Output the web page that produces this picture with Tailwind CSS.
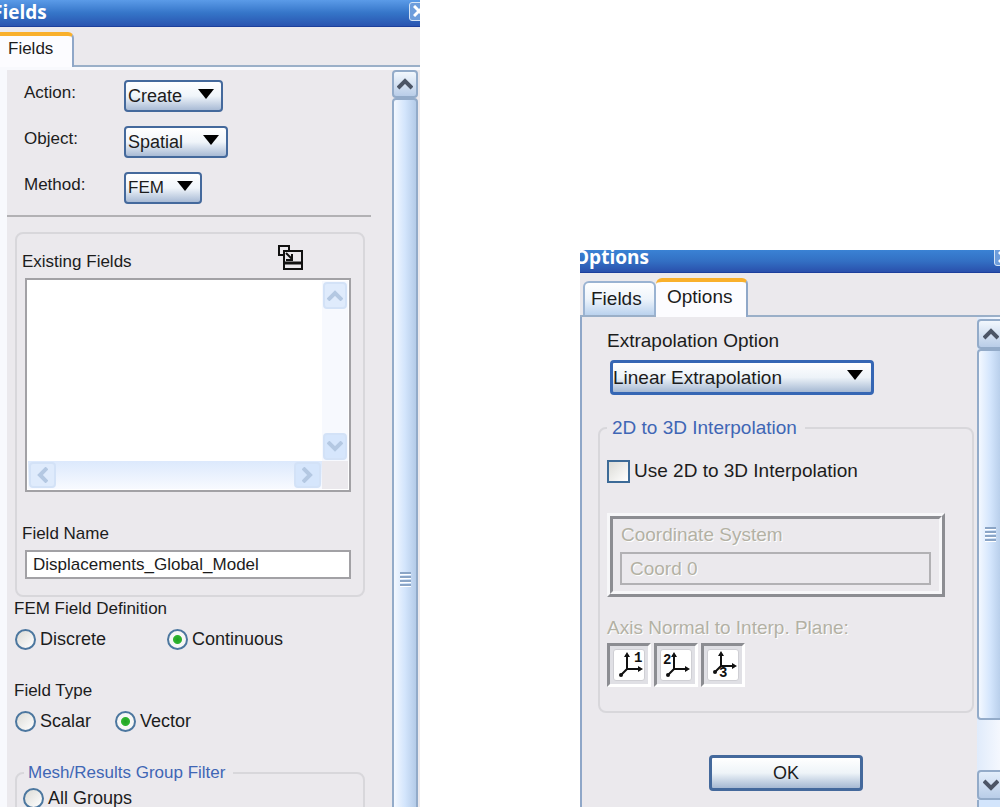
<!DOCTYPE html>
<html lang="en">
<head>
  <meta charset="UTF-8" />
  <meta name="viewport" content="width=device-width, initial-scale=1.0" />
  <title>Fields</title>
  <script src="https://cdn.jsdelivr.net/npm/@tailwindcss/browser@4"></script>
</head>
<body class="flex h-screen items-stretch justify-between overflow-hidden bg-white font-['Liberation_Sans',Arial,sans-serif] text-[17px] leading-6 text-[#1c1c1c]">

  <!-- Fields panel -->
  <section class="flex w-[42%] flex-col overflow-hidden bg-[#ebe9ed]">
    <header class="flex h-[27px] shrink-0 items-center justify-between overflow-hidden border-b border-[#1c3f9c] bg-linear-to-b from-[#5b9be8] via-[#3575c8] to-[#2a54b0]">
      <h1 class="-ml-2 pb-[2px] font-['Open_Sans',sans-serif] text-[19px] leading-6 font-bold text-white">Fields</h1>
      <button aria-label="Close" class="-mr-2 mb-1 flex size-[19px] items-center justify-center rounded-[3px] border border-[#d5e4f6] bg-[#6d9ddc]">
        <svg class="size-3" viewBox="0 0 12 12" fill="none" stroke="#fff" stroke-width="3"><path d="M1 1l10 10M11 1L1 11" /></svg>
      </button>
    </header>

    <nav class="flex h-10 shrink-0 items-end border-b-2 border-[#9aafc8]">
      <a href="#fields" class="-mb-[2px] h-[35px] w-[74px] rounded-tr-md border-t-4 border-r-2 border-t-[#f9b02c] border-r-[#8fa7c8] bg-[#fcfcff] pl-2 leading-[26px]">Fields</a>
    </nav>

    <div class="flex min-h-0 grow border-t-3 border-l-7 border-[#f8f9fd]">
      <form class="min-w-0 grow pt-[10px]">
        <div class="flex flex-col gap-[14px] pl-[17px]">
          <div class="flex h-8">
            <label for="action" class="w-[100px] pt-px">Action:</label>
            <div class="relative h-8 w-[99px]">
              <select id="action" class="h-8 w-full appearance-none rounded-[4px] border-2 border-[#44699c] bg-linear-to-b from-white via-[#f0f5fa] to-[#a9bbd5] pl-[2px] text-[18px]"><option>Create</option></select>
              <svg class="pointer-events-none absolute top-[9px] right-[9px] h-[10px] w-4" viewBox="0 0 16 10"><path d="M0 0h16L8 10z" /></svg>
            </div>
          </div>
          <div class="flex h-8">
            <label for="object" class="w-[100px] pt-px">Object:</label>
            <div class="relative h-8 w-[104px]">
              <select id="object" class="h-8 w-full appearance-none rounded-[4px] border-2 border-[#44699c] bg-linear-to-b from-white via-[#f0f5fa] to-[#a9bbd5] pl-[2px] text-[18px]"><option>Spatial</option></select>
              <svg class="pointer-events-none absolute top-[9px] right-[9px] h-[10px] w-4" viewBox="0 0 16 10"><path d="M0 0h16L8 10z" /></svg>
            </div>
          </div>
          <div class="flex h-8">
            <label for="method" class="w-[100px] pt-px">Method:</label>
            <div class="relative h-8 w-[78px]">
              <select id="method" class="h-8 w-full appearance-none rounded-[4px] border-2 border-[#44699c] bg-linear-to-b from-white via-[#f0f5fa] to-[#a9bbd5] pl-[2px]"><option>FEM</option></select>
              <svg class="pointer-events-none absolute top-[9px] right-[9px] h-[10px] w-4" viewBox="0 0 16 10"><path d="M0 0h16L8 10z" /></svg>
            </div>
          </div>
        </div>

        <hr class="mt-[11px] mr-[21px] border-t-2 border-[#b2b1b4]" />

        <div class="mt-[15px] mr-[27px] ml-2 rounded-lg border-2 border-[#d8d7db] pt-[10px] pr-[12px] pb-4 pl-2">
          <div class="flex h-[30px] justify-between">
            <span id="existing" class="-ml-[3px] self-end">Existing Fields</span>
            <!-- expand list -->
            <button type="button" aria-label="Expand" class="mr-12 size-[26px]">
              <svg class="size-[26px]" viewBox="0 0 26 26" fill="none" stroke="#111" stroke-width="2">
                <path d="M12 6V2H2v9h5" />
                <path d="M6 7h19v18H7V7" />
                <path d="M7 19h18" stroke-width="3" />
                <path d="M9 9l6 6M15 10v6H9" />
              </svg>
            </button>
          </div>
          <div role="listbox" aria-labelledby="existing" class="mt-1 grid h-[214px] grid-cols-[1fr_26px] grid-rows-[1fr_28px] border-2 border-[#a2a1a5] bg-white p-px">
            <div></div>
            <div class="flex flex-col justify-between bg-[#f7f9fe]">
              <button type="button" aria-label="Scroll up" class="m-px flex h-[27px] items-center justify-center rounded-[4px] border-2 border-[#d3e2f7] bg-[#dfebfc]">
                <svg class="h-[11px] w-4" viewBox="0 0 16 11" fill="none" stroke="#b4c8e2" stroke-width="4"><path d="M1 10l7-7 7 7" /></svg>
              </button>
              <button type="button" aria-label="Scroll down" class="m-px flex h-[27px] items-center justify-center rounded-[4px] border-2 border-[#d3e2f7] bg-[#d6e6fc]">
                <svg class="h-[11px] w-4" viewBox="0 0 16 11" fill="none" stroke="#b4c8e2" stroke-width="4"><path d="M1 1l7 7 7-7" /></svg>
              </button>
            </div>
            <div class="flex justify-between bg-linear-to-b from-[#dce9fc] to-[#f8faff]">
              <button type="button" aria-label="Scroll left" class="m-px flex w-[27px] items-center justify-center rounded-[4px] border-2 border-[#d3e2f7] bg-[#dfebfc]">
                <svg class="h-4 w-[11px]" viewBox="0 0 11 16" fill="none" stroke="#b4c8e2" stroke-width="4"><path d="M10 1L3 8l7 7" /></svg>
              </button>
              <button type="button" aria-label="Scroll right" class="m-px flex w-[27px] items-center justify-center rounded-[4px] border-2 border-[#d3e2f7] bg-[#d6e6fc]">
                <svg class="h-4 w-[11px]" viewBox="0 0 11 16" fill="none" stroke="#b4c8e2" stroke-width="4"><path d="M1 1l7 7-7 7" /></svg>
              </button>
            </div>
            <div class="bg-[#ebe9ed]"></div>
          </div>
          <label for="field-name" class="mt-[30px] mb-1 -ml-[3px] block">Field Name</label>
          <input id="field-name" type="text" value="Displacements_Global_Model" class="block h-[29px] w-full border-2 border-[#a2a1a5] bg-white px-[6px]" />
        </div>

        <div class="pl-[7px]">
          <p>FEM Field Definition</p>
          <div class="mt-[6px] flex pl-px text-[18px]">
            <label class="flex w-[152px] items-center gap-1"><input type="radio" name="definition" class="size-[21px] appearance-none rounded-full border-2 border-[#4c779f] bg-linear-to-br from-[#dcdcd7] to-white checked:bg-[radial-gradient(circle,#21a121_0,#2fb52f_4px,#f7f7f5_5px)]" />Discrete</label>
            <label class="flex items-center gap-1"><input type="radio" name="definition" checked class="size-[21px] appearance-none rounded-full border-2 border-[#4c779f] bg-linear-to-br from-[#dcdcd7] to-white checked:bg-[radial-gradient(circle,#21a121_0,#2fb52f_4px,#f7f7f5_5px)]" />Continuous</label>
          </div>
          <p class="mt-7">Field Type</p>
          <div class="mt-[6px] flex pl-px text-[18px]">
            <label class="flex w-[100px] items-center gap-1"><input type="radio" name="type" class="size-[21px] appearance-none rounded-full border-2 border-[#4c779f] bg-linear-to-br from-[#dcdcd7] to-white checked:bg-[radial-gradient(circle,#21a121_0,#2fb52f_4px,#f7f7f5_5px)]" />Scalar</label>
            <label class="flex items-center gap-1"><input type="radio" name="type" checked class="size-[21px] appearance-none rounded-full border-2 border-[#4c779f] bg-linear-to-br from-[#dcdcd7] to-white checked:bg-[radial-gradient(circle,#21a121_0,#2fb52f_4px,#f7f7f5_5px)]" />Vector</label>
          </div>
        </div>

        <fieldset class="mt-7 mr-[27px] ml-2 h-[120px] rounded-lg border-2 border-[#d8d7db] px-[6px]">
          <legend class="ml-px pr-2 pl-[4px] text-[#3f66b5]">Mesh/Results Group Filter</legend>
          <label class="flex items-center gap-1 pt-px text-[18px]"><input type="radio" name="filter" class="size-[21px] appearance-none rounded-full border-2 border-[#4c779f] bg-linear-to-br from-[#dcdcd7] to-white" />All Groups</label>
        </fieldset>
      </form>

      <!-- panel scrollbar -->
      <div class="flex w-7 shrink-0 flex-col pr-[2px]">
        <button aria-label="Scroll panel up" class="flex h-7 shrink-0 items-center justify-center rounded-[4px] border-2 border-[#93abc9] bg-linear-to-b from-[#f2f7fd] to-[#b9cde8]">
          <svg class="h-3 w-4" viewBox="0 0 16 12" fill="none" stroke="#4c5566" stroke-width="4"><path d="M1 10l7-7 7 7" /></svg>
        </button>
        <div class="-mb-1 flex grow flex-col items-center rounded-[4px] border-2 border-[#93abc9] bg-linear-to-r from-[#f3f8ff] via-[#d3e5fc] to-[#b4cbe8] pt-[472px]">
          <div class="flex flex-col gap-px">
            <span class="h-[3px] w-[11px] border-b border-white bg-[#8ba5c6]"></span>
            <span class="h-[3px] w-[11px] border-b border-white bg-[#8ba5c6]"></span>
            <span class="h-[3px] w-[11px] border-b border-white bg-[#8ba5c6]"></span>
            <span class="h-[3px] w-[11px] border-b border-white bg-[#8ba5c6]"></span>
          </div>
        </div>
      </div>
    </div>
  </section>

  <!-- Options panel -->
  <section class="mt-[250px] flex w-[42%] flex-col overflow-hidden bg-[#ebe9ed] text-[19px]">
    <header class="flex h-[23px] shrink-0 items-end justify-between overflow-hidden border-b border-[#1c3f9c] bg-linear-to-b from-[#3a82d4] via-[#3370c4] to-[#2a50ac]">
      <h1 class="-ml-[6px] pb-[3px] font-['Open_Sans',sans-serif] text-[19px] leading-6 font-bold text-white">Options</h1>
      <button aria-label="Close" class="-mr-[13px] mb-[6px] flex size-[19px] shrink-0 items-center justify-center rounded-[3px] border border-[#d5e4f6] bg-[#6d9ddc]">
        <svg class="size-3" viewBox="0 0 12 12" fill="none" stroke="#fff" stroke-width="3"><path d="M1 1l10 10M11 1L1 11" /></svg>
      </button>
    </header>

    <nav class="flex h-11 shrink-0 items-end border-b-2 border-[#9aafc8] pl-[3px]">
      <a href="#fields" class="h-[34px] w-[73px] rounded-t-md border-2 border-b-0 border-[#9ab3d2] bg-linear-to-b from-white via-[#eef4fb] to-[#bad2ee] pl-[6px] leading-8">Fields</a>
      <a href="#options" class="-mb-[2px] h-[39px] w-[92px] rounded-t-md border-t-4 border-r-2 border-t-[#f9b02c] border-r-[#8fa7c8] bg-[#fcfcff] pl-[11px] leading-[30px]">Options</a>
    </nav>

    <div class="flex min-h-0 grow border-l-2 border-[#8fa7c8]">
      <form class="min-w-0 grow pt-3 pr-[3px] pl-4">
        <label for="extrapolation" class="block pl-[9px]">Extrapolation Option</label>
        <div class="relative mt-[7px] ml-3 h-[35px] w-[264px]">
          <select id="extrapolation" class="h-[35px] w-full appearance-none rounded-[4px] border-3 border-[#3566b4] bg-linear-to-b from-white via-[#edf3f8] to-[#a6b9d3]"><option>Linear Extrapolation</option></select>
          <svg class="pointer-events-none absolute top-[10px] right-[11px] h-[10px] w-4" viewBox="0 0 16 10"><path d="M0 0h16L8 10z" /></svg>
        </div>

        <fieldset class="mt-[21px] rounded-lg border-2 border-[#d8d7db] pb-6 pl-[7px]">
          <legend class="pr-2 pl-[5px] text-[#3f66b5]">2D to 3D Interpolation</legend>
          <label class="mt-[19px] flex items-center gap-1"><input type="checkbox" class="size-[23px] appearance-none border-2 border-[#3c6a97] bg-linear-to-br from-[#dcdcd7] to-white" />Use 2D to 3D Interpolation</label>

          <div class="mt-[30px] mr-[27px] border-3 border-t-[#f7f7f9] border-r-[#8c8d92] border-b-[#8c8d92] border-l-[#f7f7f9]">
            <div class="border-3 border-t-[#8c8d92] border-r-[#f7f7f9] border-b-[#f7f7f9] border-l-[#8c8d92] pt-1 pr-2 pb-[6px] pl-[7px]">
              <label for="coord" class="block pl-px text-[#b3b1a4] [text-shadow:1px_1px_0_white]">Coordinate System</label>
              <input id="coord" type="text" value="Coord 0" disabled class="mt-[5px] block h-[33px] w-full border-2 border-[#b2b1b4] px-2 text-[#b3b1a4] [text-shadow:1px_1px_0_white]" />
            </div>
          </div>

          <p class="mt-[19px] text-[#b3b1a4] [text-shadow:1px_1px_0_white]">Axis Normal to Interp. Plane:</p>
          <div class="mt-[3px] flex gap-[3px]">
            <button type="button" aria-label="Axis 1" class="size-11 border-3 border-t-[#8c8d92] border-r-white border-b-white border-l-[#8c8d92] bg-[#e0e0e5] p-[3px]">
              <svg class="size-8 rounded-[3px] border border-[#cfcfd4] bg-white" viewBox="1 1 30 30" fill="none" stroke="#111" stroke-width="2">
                <path d="M14 6v14h11M14 20l-6 6" />
                <path d="M14 3l3 5h-6zM30 20l-5 3v-6z" fill="#111" stroke="none" />
                <circle cx="8" cy="26" r="2" fill="#111" stroke="none" />
                <text x="21" y="13" fill="#111" stroke="none" class="font-['Liberation_Mono',monospace] text-[14px] font-bold">1</text>
              </svg>
            </button>
            <button type="button" aria-label="Axis 2" class="size-11 border-3 border-t-[#8c8d92] border-r-white border-b-white border-l-[#8c8d92] bg-[#e0e0e5] p-[3px]">
              <svg class="size-8 rounded-[3px] border border-[#cfcfd4] bg-white" viewBox="1 1 30 30" fill="none" stroke="#111" stroke-width="2">
                <path d="M14 6v14h11M14 20l-6 6" />
                <path d="M14 3l3 5h-6zM30 20l-5 3v-6z" fill="#111" stroke="none" />
                <circle cx="8" cy="26" r="2" fill="#111" stroke="none" />
                <text x="3" y="15" fill="#111" stroke="none" class="font-['Liberation_Mono',monospace] text-[14px] font-bold">2</text>
              </svg>
            </button>
            <button type="button" aria-label="Axis 3" class="size-11 border-3 border-t-[#8c8d92] border-r-white border-b-white border-l-[#8c8d92] bg-[#e0e0e5] p-[3px]">
              <svg class="size-8 rounded-[3px] border border-[#cfcfd4] bg-white" viewBox="1 1 30 30" fill="none" stroke="#111" stroke-width="2">
                <path d="M14 5v12h11M14 17l-6 6" />
                <path d="M14 2l3 5h-6zM30 17l-5 3v-6z" fill="#111" stroke="none" />
                <circle cx="8" cy="23" r="2" fill="#111" stroke="none" />
                <text x="12" y="28" fill="#111" stroke="none" class="font-['Liberation_Mono',monospace] text-[14px] font-bold">3</text>
              </svg>
            </button>
          </div>
        </fieldset>

        <button type="button" class="mx-auto mt-[42px] block h-9 w-[154px] rounded-[4px] border-3 border-[#44699c] bg-linear-to-b from-white via-[#eef4f8] to-[#a6b9d3] text-[18px]">OK</button>
      </form>

      <!-- panel scrollbar -->
      <div class="-mr-1 flex w-[27px] shrink-0 flex-col bg-linear-to-r from-[#e0ebfb] to-[#f8faff] pt-[2px]">
        <button aria-label="Scroll panel up" class="flex h-[30px] shrink-0 items-center justify-center rounded-[4px] border-2 border-[#93abc9] bg-linear-to-b from-[#f2f7fd] to-[#b9cde8]">
          <svg class="h-3 w-4" viewBox="0 0 16 12" fill="none" stroke="#4c5566" stroke-width="4"><path d="M1 10l7-7 7 7" /></svg>
        </button>
        <div class="mb-[50px] flex grow flex-col items-center justify-center rounded-[4px] border-2 border-[#93abc9] bg-linear-to-r from-[#f3f8ff] via-[#d3e5fc] to-[#b4cbe8]">
          <div class="flex flex-col gap-px">
            <span class="h-[3px] w-[11px] border-b border-white bg-[#8ba5c6]"></span>
            <span class="h-[3px] w-[11px] border-b border-white bg-[#8ba5c6]"></span>
            <span class="h-[3px] w-[11px] border-b border-white bg-[#8ba5c6]"></span>
            <span class="h-[3px] w-[11px] border-b border-white bg-[#8ba5c6]"></span>
          </div>
        </div>
        <button aria-label="Scroll panel down" class="flex h-[30px] shrink-0 items-center justify-center rounded-[4px] border-2 border-[#93abc9] bg-linear-to-b from-[#e3eefb] to-[#b9cde8]">
          <svg class="h-3 w-4" viewBox="0 0 16 12" fill="none" stroke="#4c5566" stroke-width="4"><path d="M1 2l7 7 7-7" /></svg>
        </button>
        <div class="h-[7px] shrink-0 border-x-2 border-[#93abc9] bg-[#d3e5fc]"></div>
      </div>
    </div>
  </section>

</body>
</html>
